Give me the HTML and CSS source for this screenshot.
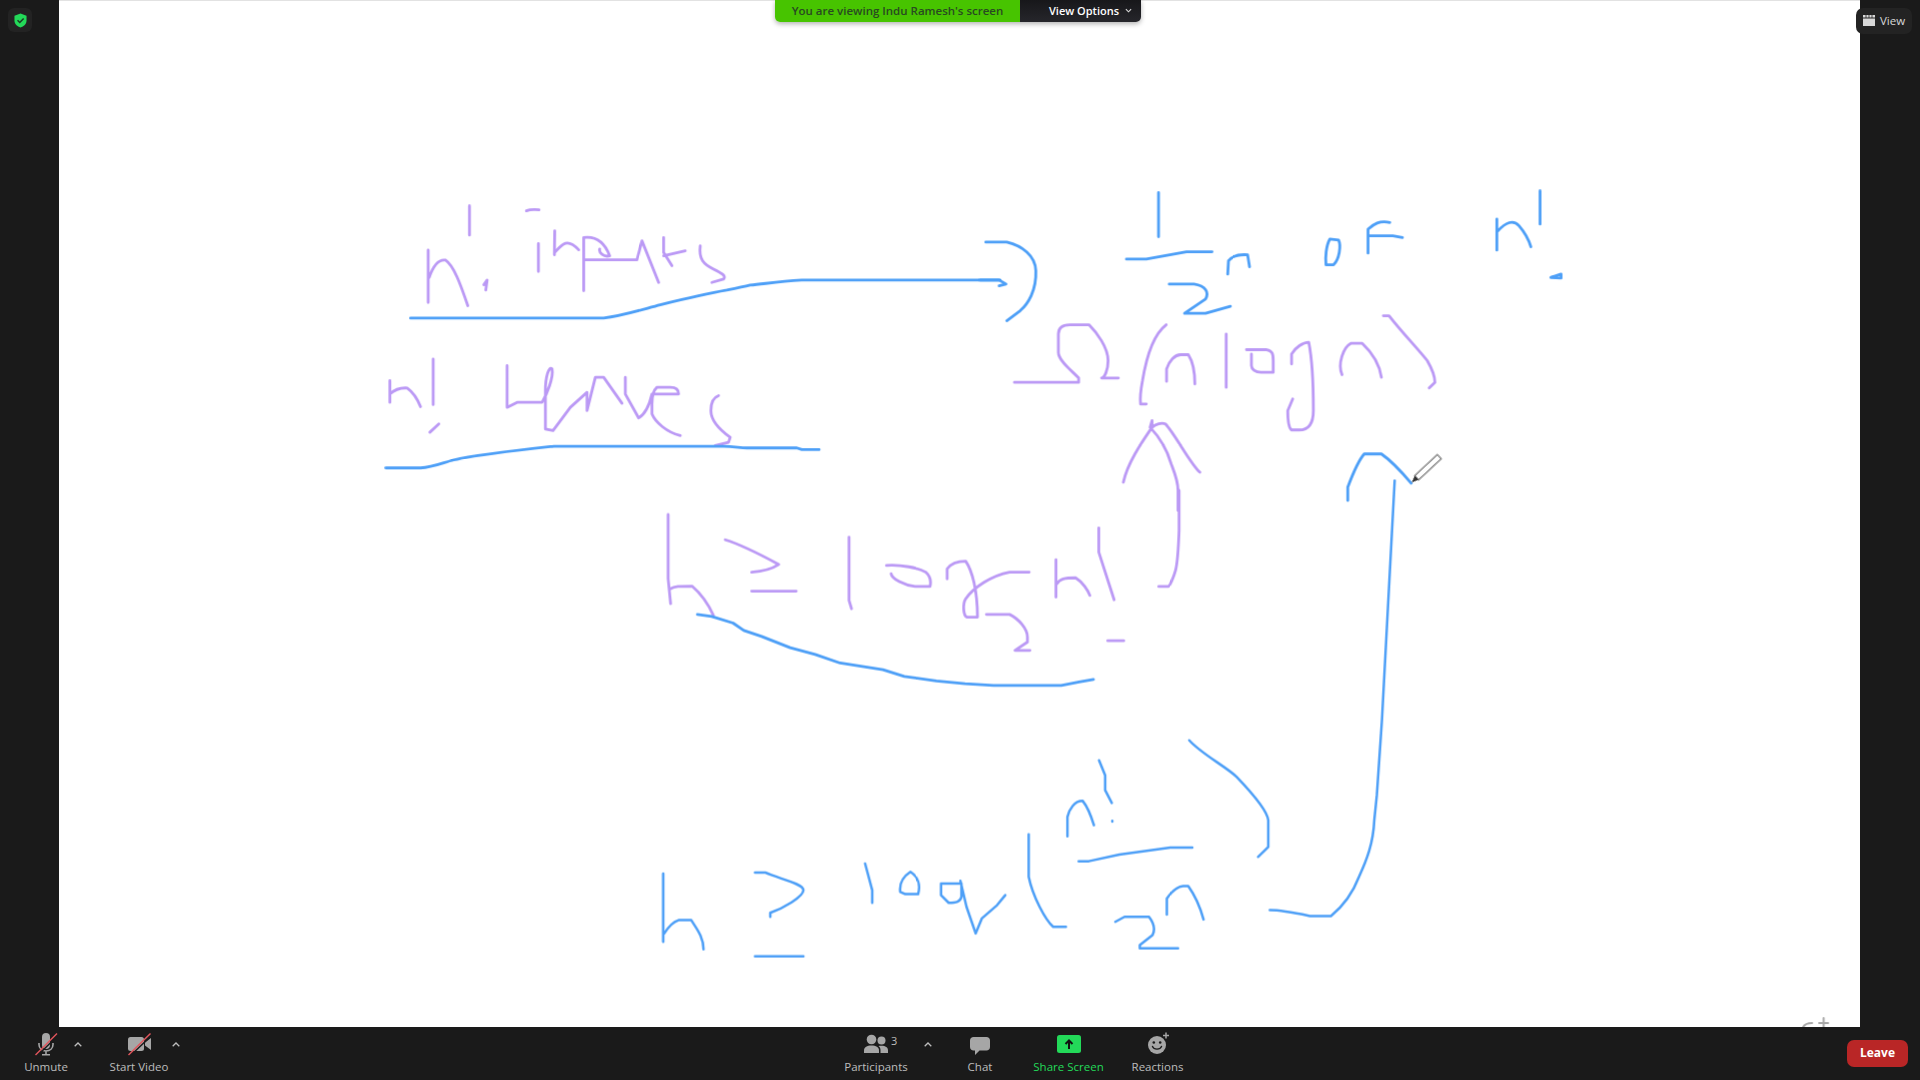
FILE: index.html
```html
<!DOCTYPE html>
<html lang="en">
<head>
<meta charset="utf-8">
<title>Zoom meeting</title>
<link rel="stylesheet" href="styles.css">
</head>
<body>
<div class="app">
  <div class="stage">
    <aside class="side side-left">
      <div class="shield-box">
        <svg class="shield" viewBox="0 0 14 16"><path class="i-green" d="M7 0.5 L13.5 2.8 V8 C13.5 11.8 10.5 14.4 7 15.5 C3.5 14.4 0.5 11.8 0.5 8 V2.8 Z"/><path class="i-check" d="M3.8 7.8 L6.2 10.2 L10.4 5.8"/></svg>
      </div>
    </aside>
    <main class="canvas">
      <svg class="board" viewBox="59 0 1801 1027">
        <g class="ink">
          <g transform="translate(370 180) scale(.33333)">
            <g class="purple">
              <path d="M173 208 V365 M176 290 C190 250 205 235 225 238 C250 255 270 310 292 375"/>
              <path d="M297 75 V163 M340 312 L350 298 L346 328"/>
              <path d="M504 188 V272 M468 90 Q480 85 506 87"/>
              <path d="M552 222 L553 150 M553 215 C575 190 590 170 625 207"/>
              <path d="M640 170 V330 M640 170 C680 165 705 190 718 225 C700 230 685 215 688 205 M640 237 H800 L815 180 L865 305"/>
              <path d="M880 170 V215 L905 255 M880 225 L945 210"/>
              <path d="M990 195 C985 235 1000 250 1030 265 C1050 275 1070 285 1060 295 L1025 305"/>
              <path d="M58 665 V600 M58 640 Q80 620 110 622 Q135 640 150 678 M188 535 V672 M178 755 L205 730"/>
              <path d="M410 555 V680 L440 665 H515 C530 640 550 590 545 565 C535 555 525 590 525 630 V745 L548 750 L600 680 L650 635 V690 L675 590 H700 L755 668"/>
              <path d="M765 590 V640 L805 712 C825 700 838 670 845 640 H925 C925 625 915 620 900 620 H860 C848 630 845 650 845 670 V700 C855 725 890 755 930 765"/>
              <path d="M1045 645 C1030 650 1022 665 1022 690 C1022 720 1045 745 1080 770 L1075 785 L1035 795"/>
            </g>
            <g class="blue">
              <path d="M120 412 H700 C760 405 820 385 870 372 C960 350 1030 335 1070 328 C1100 322 1120 318 1140 313 C1180 310 1220 302 1295 298 H1890"/>
              <path d="M46 862 H150 C190 860 220 845 250 838 C320 822 450 808 550 797 H1060 C1090 797 1110 802 1130 802 H1280 L1295 807 H1347"/>
            </g>
          </g>
          <g transform="translate(980 170) scale(.38265 .33333)">
            <g class="blue">
              <path d="M15 214 H70 C110 225 145 255 146 300 C148 360 125 400 105 420 L70 450 M0 328 H50 L68 340 L50 345"/>
              <path d="M467 65 V198 M383 265 H435 L540 243 H607"/>
              <path d="M495 340 H560 C590 345 600 365 590 385 L535 428 H590 L655 407"/>
              <path d="M648 310 L650 270 C660 255 675 250 700 252 L705 288"/>
              <path d="M915 205 C905 225 903 260 905 282 H925 C940 265 945 225 938 208 Z"/>
              <path d="M1072 155 C1045 148 1030 160 1015 175 V247 M1015 195 H1080 L1105 200"/>
              <path d="M1352 238 V145 M1355 180 C1375 155 1395 145 1410 165 C1425 185 1435 205 1441 228 M1465 60 V160 M1493 320 L1520 310 V322 Z"/>
              <path d="M962 990 V950 C975 910 990 870 1005 850 H1050 C1075 870 1100 900 1128 938"/>
            </g>
            <g class="purple">
              <path d="M90 635 H258 V622 C240 600 205 570 205 545 V490 C205 470 215 462 235 462 H285 C305 485 335 530 335 570 C335 600 325 622 318 622 H362"/>
              <path d="M487 462 C455 490 435 560 425 630 C420 660 418 680 420 700 H435"/>
              <path d="M488 632 V595 C495 570 510 552 525 552 H545 C555 570 562 600 562 640 M644 490 V650"/>
              <path d="M697 537 H750 C765 540 767 550 767 570 V605 H735 C720 605 710 595 710 585 V550"/>
              <path d="M815 580 V550 C825 530 845 515 860 515 C868 560 872 640 872 720 C872 760 860 778 835 778 H815 C805 770 805 740 805 720 L818 685"/>
              <path d="M947 612 C935 580 950 530 970 518 H1000 C1025 545 1045 580 1050 620"/>
              <path d="M1055 435 H1070 C1100 480 1150 540 1170 570 C1185 600 1190 620 1190 635 L1175 652"/>
              <path d="M375 935 C385 880 420 820 450 770 V750 L445 770 C470 800 490 840 500 880 C510 910 518 930 518 960 V1020 M450 770 C460 760 475 755 485 760 C510 790 550 880 575 905"/>
            </g>
          </g>
          <g transform="translate(640 490) scale(.35714 .33333)" class="purple">
            <path d="M78 72 V265 L85 340 M85 295 C95 287 110 287 145 287 C170 310 190 340 205 375"/>
            <path d="M238 148 C290 165 350 200 388 222 C370 235 340 243 312 245 M312 302 H437"/>
            <path d="M585 140 V330 L592 355"/>
            <path d="M690 225 C730 222 780 232 800 245 C815 260 815 275 812 288 H770 C740 285 705 265 703 250"/>
            <path d="M860 265 V235 C870 220 890 212 912 212 C930 240 945 300 945 380 H915 C905 375 903 340 912 325 C935 290 985 255 1035 245 H1090"/>
            <path d="M970 372 H1035 C1060 385 1085 415 1085 440 V455 L1050 480 H1092"/>
            <path d="M1165 208 V320 M1168 280 C1175 265 1190 262 1220 262 C1240 275 1255 300 1260 315 M1285 112 V185 L1328 328 M1310 451 H1355"/>
            <path d="M1510 0 V120 C1508 180 1505 220 1500 240 C1495 260 1485 285 1480 288 H1453"/>
          </g>
          <g transform="translate(640 490) scale(.35714 .33333)" class="blue">
            <path d="M160 372 L200 378 L260 398 L290 420 L340 438 L420 472 L490 492 L560 518 L680 538 L740 558 L830 572 L910 580 L990 585 H1180 L1230 575 L1270 567"/>
          </g>
          <g transform="translate(640 720) scale(.5102 .33333)" class="blue thin">
            <path d="M45 460 V665 M47 640 C55 620 65 605 75 600 H100 C110 625 124 650 124 688"/>
            <path d="M225 457 H245 C270 475 320 490 320 510 C320 530 280 565 255 578 V590 M225 709 H320"/>
            <path d="M441 430 L455 510 V548"/>
            <path d="M530 455 C515 470 508 490 510 515 L520 522 H545 C550 495 545 470 530 455 Z"/>
            <path d="M590 490 H630 V530 C628 545 620 548 605 548 L590 525 Z M628 482 L640 560 L658 640 L670 595 L700 555 L716 525"/>
            <path d="M762 342 V470 C770 530 795 600 810 620 H835"/>
            <path d="M838 348 V290 C842 265 852 242 868 242 C880 265 885 290 890 315 M900 120 L912 165 V210 L925 248 M926 302 V304"/>
            <path d="M860 423 H880 L940 403 L1040 382 H1083"/>
            <path d="M932 605 L950 590 H998 C1008 610 1010 630 1005 645 L980 675 V685 H1055"/>
            <path d="M1033 583 V535 C1040 520 1050 500 1065 498 H1075 C1090 530 1100 570 1105 598"/>
            <path d="M1077 60 C1100 100 1150 140 1170 170 C1195 210 1230 270 1232 300 V380 L1212 410"/>
            <path d="M1235 570 C1260 570 1290 580 1315 588 H1355 C1385 550 1400 510 1410 470 C1425 420 1438 370 1440 300 L1445 225 L1455 0 L1480 -720"/>
          </g>
          <path class="smudge" d="M1804 1027 Q1806 1023 1813 1023 M1820 1023 H1829 M1824.500 1018 V1027"/>
        </g>
        <g transform="translate(1412 482) rotate(-43)">
          <path class="pen-body" d="M7 -2.800 H38 V2.800 H7 Z"/>
          <path class="pen-tip" d="M0 0 L7 -2.800 V2.800 Z"/>
        </g>
      </svg>
    </main>
    <aside class="side side-right">
      <div class="view-btn">
        <svg class="view-icon" viewBox="0 0 12 11"><path class="i-light" d="M0 3.500 H12 V11 H0 Z M0 0 H2.600 V2.500 H0 Z M3.400 0 H5.600 V2.500 H3.400 Z M6.400 0 H8.600 V2.500 H6.400 Z M9.400 0 H12 V2.500 H9.400 Z"/></svg>
        <span>View</span>
      </div>
    </aside>
  </div>
  <footer class="toolbar">
    <div class="tool t-unmute">
      <svg class="icon" viewBox="0 0 24 24">
        <rect class="i-gray" x="8" y="1" width="8" height="16" rx="4"/>
        <path class="i-line" d="M5 11 V12.500 C5 16.500 8 19 12 19 C16 19 19 16.500 19 12.500 V11 M12 19 V22.500 M8 22.700 H16"/>
        <path class="i-slash-dark" d="M3 24 L24.500 3"/><path class="i-slash" d="M1.500 23 L23 1.500"/>
      </svg>
      <span class="label">Unmute</span>
    </div>
    <svg class="caret" viewBox="0 0 8 5"><path d="M0.700 4.300 L4 1 L7.300 4.300"/></svg>
    <div class="tool t-video">
      <svg class="icon" viewBox="0 0 24 24">
        <rect class="i-gray" x="1" y="5" width="16" height="14" rx="2.500"/>
        <path class="i-gray" d="M18 10.500 L24 6 V18 L18 13.500 Z"/>
        <path class="i-slash-dark" d="M3 24 L25 3"/><path class="i-slash" d="M1.500 23 L23.500 1.500"/>
      </svg>
      <span class="label">Start Video</span>
    </div>
    <svg class="caret" viewBox="0 0 8 5"><path d="M0.700 4.300 L4 1 L7.300 4.300"/></svg>

    <div class="tool t-part">
      <svg class="icon" viewBox="0 0 24 24">
        <circle class="i-gray" cx="7.500" cy="7.500" r="4.800"/>
        <path class="i-gray" d="M0 21 V18.500 C0 15 3 13.500 7.500 13.500 C12 13.500 15 15 15 18.500 V21 Z"/>
        <circle class="i-gray" cx="17.500" cy="8.500" r="4"/>
        <path class="i-gray" d="M16.500 21 V18 C16.500 16 15.500 14.800 14.500 14 C15.500 13.700 16.500 13.700 17.500 13.700 C21.500 13.700 24 15.300 24 18.300 V21 Z"/>
      </svg>
      <span class="count">3</span>
      <span class="label">Participants</span>
    </div>
    <svg class="caret caret-part" viewBox="0 0 8 5"><path d="M0.700 4.300 L4 1 L7.300 4.300"/></svg>
    <div class="tool t-chat">
      <svg class="icon" viewBox="0 0 24 24">
        <path class="i-gray" d="M5.500 5 H18.500 C20.500 5 22 6.500 22 8.500 V15 C22 17 20.500 18.500 18.500 18.500 H11.500 L7 23 V18.500 H5.500 C3.500 18.500 2 17 2 15 V8.500 C2 6.500 3.500 5 5.500 5 Z"/>
      </svg>
      <span class="label">Chat</span>
    </div>
    <div class="tool t-share">
      <svg class="icon" viewBox="0 0 24 24">
        <rect class="i-green" x="0" y="3" width="24" height="18" rx="2.500"/>
        <path class="i-arrow" d="M12 17 V8.500 M8.500 12 L12 8.500 L15.500 12"/>
      </svg>
      <span class="label label-green">Share Screen</span>
    </div>
    <div class="tool t-react">
      <svg class="icon" viewBox="0 0 24 24">
        <circle class="i-gray" cx="11" cy="13" r="9"/>
        <circle class="i-dark" cx="7.800" cy="10.500" r="1.300"/>
        <circle class="i-dark" cx="14.200" cy="10.500" r="1.300"/>
        <path class="i-smile" d="M6.500 14.500 C8 18 14 18 15.500 14.500"/>
        <path class="i-plus" d="M20 0.500 V6.500 M17 3.500 H23"/>
      </svg>
      <span class="label">Reactions</span>
    </div>
    <div class="leave">Leave</div>
  </footer>
  <div class="banner">
    <div class="banner-msg">You are viewing Indu Ramesh's screen</div>
    <div class="banner-opt">View Options
      <svg class="banner-chev" viewBox="0 0 8 5"><path d="M1 1 L4 4 L7 1"/></svg>
    </div>
  </div>
</div>
</body>
</html>
```

FILE: styles.css
```css
* { box-sizing: border-box; }
html, body { margin: 0; height: 100%; }
body { background: #1a1a1a; font-family: "Open Sans", "Liberation Sans", sans-serif; overflow: hidden; }

.app { position: relative; display: flex; flex-direction: column; height: 100vh; }
.stage { display: flex; flex: 1; min-height: 0; }

.side { background: #1a1a1a; flex: none; position: relative; }
.side-left { width: 59px; padding: 8px; }
.side-right { width: 60px; }

.shield-box { width: 24px; height: 24px; border-radius: 6px; background: #232323; display: flex; align-items: center; justify-content: center; }
.shield { width: 13px; height: 15px; }
.i-green { fill: #23d959; }
.i-check { fill: none; stroke: #1d3a26; stroke-width: 1.6; }

.canvas { flex: 1; background: #fff; border-top: 1px solid #e2e2e2; min-width: 0; }
.board { display: block; width: 100%; height: 100%; }

.ink path { fill: none; stroke-linecap: round; stroke-linejoin: round; vector-effect: non-scaling-stroke; stroke-width: 2.800px; }
.ink { filter: blur(0.3px); }
.ink .thin path { stroke-width: 2.500px; }
.purple path { stroke: #bb99f5; }
.blue path { stroke: #4d9ff7; }
.ink .smudge { stroke: #8a8a8a; stroke-width: 2px; opacity: .75; }
.pen-body { fill: #fff; stroke: #777; stroke-width: 1.200; }
.pen-tip { fill: #333; }

.view-btn { position: absolute; left: -4px; top: 8px; width: 56px; height: 26px; border-radius: 7px; background: #232323; color: #d8d8d8; font-size: 11.5px; display: flex; align-items: center; gap: 5px; padding: 0 0 2px 7px; }
.view-icon { width: 12px; height: 11px; }
.i-light { fill: #d8d8d8; }

.toolbar { flex: none; height: 53px; display: flex; align-items: flex-start; background: #1a1a1a; padding-left: 20px; padding-right: 12px; }
.tool { position: relative; display: flex; flex-direction: column; align-items: center; flex: none; padding-top: 5px; }
.icon { display: block; width: 24px; height: 24px; }
.label { display: block; font-size: 11.5px; line-height: 16px; margin-top: 3px; color: #bdbdbd; white-space: nowrap; }
.label-green { color: #23d959; }

.t-unmute { width: 52px; }
.t-video { width: 70px; margin-left: 22px; }
.t-part { width: 62px; margin-left: 665px; }
.t-chat { width: 40px; margin-left: 28px; }
.t-share { width: 69px; margin-left: 34px; }
.t-react { width: 51px; margin-left: 29px; }

.caret { flex: none; width: 8px; height: 5px; margin: 15px 0 0 2px; }
.caret path { fill: none; stroke: #bdbdbd; stroke-width: 1.300; }
.t-video + .caret { margin-left: -2px; }
.caret-part { margin-left: 17px; }

.count { position: absolute; left: 46px; top: 7px; font-size: 11px; line-height: 14px; color: #bdbdbd; }

.i-gray { fill: #a6a6a6; }
.i-dark { fill: #1a1a1a; }
.i-line { fill: none; stroke: #a6a6a6; stroke-width: 1.600; }
.i-slash { fill: none; stroke: #e0555c; stroke-width: 1.500; }
.i-slash-dark { fill: none; stroke: #1a1a1a; stroke-width: 1.500; }
.i-arrow { fill: none; stroke: #111; stroke-width: 2; }
.i-smile { fill: none; stroke: #1a1a1a; stroke-width: 1.400; stroke-linecap: round; }
.i-plus { fill: none; stroke: #a6a6a6; stroke-width: 1.500; }

.leave { margin: 13px 0 0 auto; width: 61px; height: 27px; border-radius: 7px; background: #b92626; color: #fff; font-size: 12px; font-weight: 700; line-height: 25px; text-align: center; }

.banner { position: absolute; left: 775px; top: 0; width: 366px; height: 22px; display: flex; border-radius: 0 0 5px 5px; overflow: hidden; box-shadow: 0 2px 5px rgba(0,0,0,.3); font-size: 11.5px; font-weight: 600; line-height: 21px; }
.banner-msg { width: 245px; background: #47c400; color: #294a22; text-align: center; }
.banner-opt { flex: 1; background: linear-gradient(#17171a, #26262b); color: #fff; display: flex; align-items: center; padding: 0 0 1px 29px; gap: 6px; font-size: 11px; }
.banner-chev { width: 7px; height: 5px; }
.banner-chev path { fill: none; stroke: #d8d8d8; stroke-width: 1.300; }
```
